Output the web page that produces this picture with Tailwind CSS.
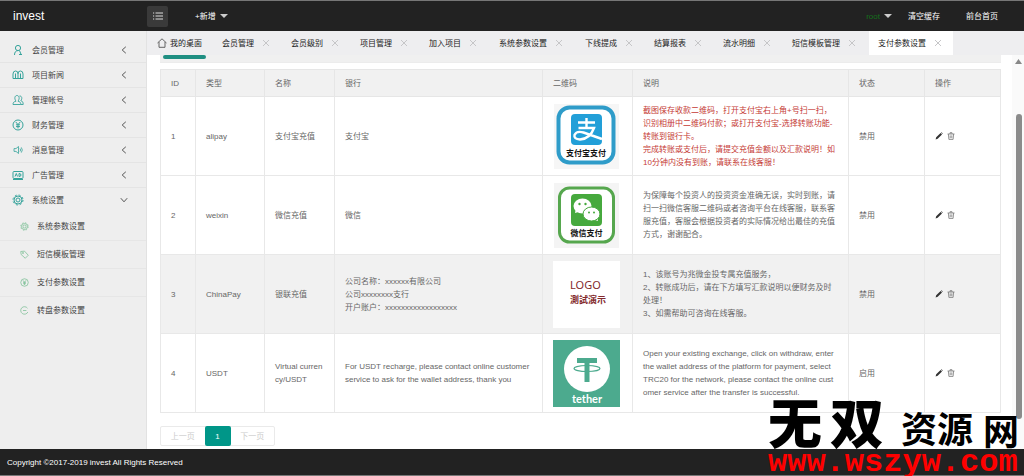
<!DOCTYPE html>
<html lang="zh-CN">
<head>
<meta charset="utf-8">
<title>invest</title>
<script src="https://cdn.jsdelivr.net/npm/@tailwindcss/browser@4"></script>
</head>
<body class="relative flex h-screen flex-col overflow-hidden bg-white font-['Liberation_Sans','Noto_Sans_CJK_SC',sans-serif] text-[8px] leading-[13px] text-[#666]">
<svg class="hidden" aria-hidden="true">
  <symbol id="left" viewBox="0 0 8 8"><path d="M5.800.8 2.200 4l3.600 3.200" fill="none" stroke="#555"/></symbol>
  <symbol id="x" viewBox="0 0 8 8"><path d="M1 1l6 6M7 1 1 7" fill="none" stroke="#c6c6c8"/></symbol>
  <symbol id="pen" viewBox="0 0 8 8"><path d="M.6 7.400 1.200 5.300 5.600 1 7 2.400 2.700 6.800zM6 .6l.6-.4 1.200 1.200-.4.6z" fill="#333"/></symbol>
  <symbol id="bin" viewBox="0 0 8 8"><path d="M.5 2h7M3 2V.7h2V2M1.400 2l.5 5.400h4.200L6.600 2M3.200 3.400v2.800M4.800 3.400v2.800" fill="none" stroke="#777" stroke-width=".8"/></symbol>
  <symbol id="yen" viewBox="0 0 12 12"><g fill="none" stroke="currentColor"><circle cx="6" cy="6" r="5"/><path d="M3.800 3 6 5.600 8.200 3M6 5.600v3.800M4 5.800h4M4 7.600h4"/></g></symbol>
  <symbol id="gear" viewBox="0 0 12 12"><g fill="none" stroke="currentColor"><circle cx="6" cy="6" r="4"/><circle cx="6" cy="6" r="2"/><circle cx="6" cy="6" r="5" stroke-dasharray="2 1.930"/></g></symbol>
</svg>

<header class="flex h-[31px] shrink-0 items-center border-t border-[#777] bg-[#222] text-white">
  <a href="#" class="w-[147px] pl-[13px] text-[12px]">invest</a>
  <button class="flex h-[21px] w-[21px] items-center justify-center rounded-xs bg-[#3a3a3a]" aria-label="菜单">
    <svg class="h-2 w-2.5" viewBox="0 0 10 8"><path d="M0 1h1.200M2.500 1H10M0 4h1.200M2.500 4H10M0 7h1.200M2.500 7H10" stroke="#ddd"/></svg>
  </button>
  <button class="ml-[27px] flex items-center gap-1">+新增<svg class="h-1 w-2" viewBox="0 0 8 4"><path d="M0 0h8L4 4z" fill="#ccc"/></svg></button>
  <nav class="ml-auto flex items-center pr-[26px]">
    <button class="mr-4 flex items-center gap-1 text-[#14701c]">root<svg class="h-1 w-2" viewBox="0 0 8 4"><path d="M0 0h8L4 4z" fill="#ccc"/></svg></button>
    <a href="#" class="mr-[26px]">清空缓存</a>
    <a href="#">前台首页</a>
  </nav>
</header>

<div class="flex min-h-0 flex-1">
  <aside class="w-[147px] shrink-0 border-r border-[#e2e2e2] bg-[#eee] pt-[7px] text-[#444]">
    <ul class="[&>li>a]:flex [&>li>a]:h-[25px] [&>li>a]:items-center [&>li>a]:border-b [&>li>a]:border-[#e4e4e4] [&>li>a]:pr-[18px] [&>li>a]:pl-3 [&>li>a>svg:first-child]:mr-2 [&>li>a>svg:first-child]:size-3 [&>li>a>svg:first-child]:text-[#35a39b] [&>li>a>svg:last-child]:ml-auto [&>li>a>svg:last-child]:size-2">
      <li><a href="#"><svg viewBox="0 0 12 12" fill="none" stroke="currentColor"><circle cx="6" cy="4" r="2.600"/><path d="M2.500 11c0-3 1.500-4.400 3.500-4.400M7.500 6.500 9.300 11M7 10.500h3"/></svg>会员管理<svg><use href="#left"/></svg></a></li>
      <li><a href="#"><svg viewBox="0 0 12 12" fill="none" stroke="currentColor"><path d="M1 9.500V5Q1 2 3.500 2T6 4.500Q6 2 8.500 2T11 5v4.500zM6 4v5M3.500 4.500v5M8.500 4.500v5"/></svg>项目新闻<svg><use href="#left"/></svg></a></li>
      <li><a href="#"><svg viewBox="0 0 12 12" fill="none" stroke="currentColor" stroke-width=".9"><path d="M1 10.500c0-2 .8-2.800 3-3.300C2 4.500 2.800 1.500 5 1.500S8 4.500 6 7.200c2 .5 2.800 1.300 2.800 3.300zM7.500 2c2.500-.3 3 2.800 1.300 4.700 1.700.4 2.400 1.500 2.400 3.800H9"/></svg>管理帐号<svg><use href="#left"/></svg></a></li>
      <li><a href="#"><svg><use href="#yen"/></svg>财务管理<svg><use href="#left"/></svg></a></li>
      <li><a href="#"><svg viewBox="0 0 12 12" fill="none" stroke="currentColor" stroke-width=".8"><path d="M2 4.600h2L6.500 2.500v7L4 7.400H2zM8 4.500q1.300 1.500 0 3M9.300 3.400q2 2.600 0 5.200"/></svg>消息管理<svg><use href="#left"/></svg></a></li>
      <li><a href="#"><svg viewBox="0 0 12 12" fill="none" stroke="currentColor"><rect x="1" y="2.500" width="10" height="7" rx="1"/><path d="M3 7.500 4.300 4.500l1.200 3M7 4.500v3q2 0 2-1.500T7 4.500M1 10.500h10"/></svg>广告管理<svg><use href="#left"/></svg></a></li>
      <li>
        <a href="#" class="!border-transparent"><svg><use href="#gear"/></svg>系统设置<svg class="-rotate-90"><use href="#left"/></svg></a>
        <ul class="[&_a]:flex [&_a]:h-7 [&_a]:items-center [&_a]:gap-2 [&_a]:border-b [&_a]:border-[#e6e6e6] [&_a]:pl-5 [&_svg]:size-[9px] [&_svg]:text-[#7cbf95]">
          <li><a href="#"><svg><use href="#gear"/></svg>系统参数设置</a></li>
          <li><a href="#"><svg viewBox="0 0 12 12" fill="none" stroke="currentColor"><path d="M1 2l5-.5L11 7l-4 4-5.500-5z"/><circle cx="4" cy="4" r=".8"/></svg>短信模板管理</a></li>
          <li><a href="#"><svg><use href="#yen"/></svg>支付参数设置</a></li>
          <li><a href="#" class="!border-transparent"><svg viewBox="0 0 12 12" fill="none" stroke="currentColor"><path d="M10 3a5 5 0 1 0 .5 5M4 6h4.500"/></svg>转盘参数设置</a></li>
        </ul>
      </li>
    </ul>
  </aside>

  <main class="relative flex min-w-0 flex-1 flex-col">
    <nav class="flex h-6 shrink-0 bg-[#eeeef0] pl-2.5 text-[#222] [&>a]:flex [&>a]:shrink-0 [&>a]:items-center [&>a]:gap-2 [&>a]:pl-[9px] [&>a>svg]:size-2">
      <a href="#" class="relative mr-[11px] !gap-[3px] !pl-0"><svg class="!size-[10px]" viewBox="0 0 10 10"><path d="M.5 5 5 .8 9.500 5M2 4v5.300h6V4" fill="none" stroke="#555" stroke-width=".9"/></svg>我的桌面<span class="absolute top-6 -right-1 z-10 h-1 w-[43px] rounded-xs bg-[#1f8f82]"></span></a>
      <a href="#" class="w-[69px]">会员管理<svg><use href="#x"/></svg></a>
      <a href="#" class="w-[69px]">会员级别<svg><use href="#x"/></svg></a>
      <a href="#" class="w-[69px]">项目管理<svg><use href="#x"/></svg></a>
      <a href="#" class="w-[70px]">加入项目<svg><use href="#x"/></svg></a>
      <a href="#" class="w-[86px]">系统参数设置<svg><use href="#x"/></svg></a>
      <a href="#" class="w-[69px]">下线提成<svg><use href="#x"/></svg></a>
      <a href="#" class="w-[69px]">结算报表<svg><use href="#x"/></svg></a>
      <a href="#" class="w-[69px]">流水明细<svg><use href="#x"/></svg></a>
      <a href="#" class="w-[86px]">短信模板管理<svg><use href="#x"/></svg></a>
      <a href="#" class="w-[84px] bg-white">支付参数设置<svg><use href="#x"/></svg></a>
    </nav>

    <div class="min-h-0 flex-1 overflow-hidden pr-[23px] pl-[13px]">
      <div class="mb-1.5 h-2 border-b border-[#ececec] bg-[#f0f0f0]"></div>
      <table class="w-full table-fixed border-collapse text-left [&_td]:border [&_td]:border-[#e8e8e8] [&_td]:px-2.5 [&_td]:py-0 [&_th]:border [&_th]:border-[#e6e6e6] [&_th]:px-2.5 [&_th]:font-normal [&_tbody_tr]:h-[79px]">
        <colgroup><col class="w-[35px]"><col class="w-[69px]"><col class="w-[70px]"><col class="w-[208px]"><col class="w-[90px]"><col><col class="w-[76px]"><col class="w-[76px]"></colgroup>
        <thead><tr class="h-[27px] bg-[#f1f1f1]"><th>ID</th><th>类型</th><th>名称</th><th>银行</th><th>二维码</th><th>说明</th><th>状态</th><th>操作</th></tr></thead>
        <tbody>
          <tr>
            <td>1</td><td>alipay</td><td>支付宝充值</td><td>支付宝</td>
            <td><svg class="size-[67px]" viewBox="0 0 67 67" role="img" aria-label="支付宝支付">
              <path d="M1 1h65v65H1z" fill="#f6f6f6"/><rect x="5.500" y="4.500" width="55" height="55" rx="11" fill="#fff" stroke="#2f9cc9" stroke-width="4"/>
              <rect x="18" y="11" width="31" height="31" rx="4" fill="#229fd8"/>
              <path d="M25 19.500h17M33.500 15v10M25.500 25H41Q37 36 27 36.500 20.500 36 21.500 32q2-4.500 9-2.500L49 36" fill="none" stroke="#fff" stroke-width="2.400"/>
              <text x="33" y="53" text-anchor="middle" font-size="8" font-weight="700" fill="#111">支付宝支付</text></svg></td>
            <td class="whitespace-nowrap text-[#c53a35]">截图保存收款二维码，打开支付宝右上角+号扫一扫，<br>识别相册中二维码付款；或打开支付宝-选择转账功能-<br>转账到银行卡。<br>完成转账或支付后，请提交充值金额以及汇款说明！如<br>10分钟内没有到账，请联系在线客服！</td>
            <td>禁用</td><td><div class="flex gap-1"><button aria-label="编辑"><svg class="size-2"><use href="#pen"/></svg></button><button aria-label="删除"><svg class="size-2"><use href="#bin"/></svg></button></div></td>
          </tr>
          <tr>
            <td>2</td><td>weixin</td><td>微信充值</td><td>微信</td>
            <td><svg class="size-[67px]" viewBox="0 0 67 67" role="img" aria-label="微信支付">
              <path d="M1 1h65v65H1z" fill="#f4f4f4"/><rect x="6.500" y="6" width="54" height="54" rx="10" fill="#fff" stroke="#56a74e" stroke-width="3"/>
              <rect x="18" y="12" width="31" height="32" rx="4" fill="#46a93d"/>
              <path d="M22 31l1-5h6v3zM45 39l-1-5h-5v3z" fill="#fff"/><ellipse cx="29.500" cy="24" rx="9" ry="7.500" fill="#fff"/><ellipse cx="38.500" cy="32" rx="8.500" ry="7" fill="#fff" stroke="#46a93d"/>
              <g fill="#46a93d"><circle cx="26.500" cy="22" r="1.200"/><circle cx="32.500" cy="22" r="1.200"/><circle cx="36" cy="30.500" r="1"/><circle cx="41" cy="30.500" r="1"/></g>
              <text x="33.500" y="54" text-anchor="middle" font-size="8" font-weight="700" fill="#111">微信支付</text></svg></td>
            <td class="whitespace-nowrap">为保障每个投资人的投资资金准确无误，实时到账，请<br>扫一扫微信客服二维码或者咨询平台在线客服，联系客<br>服充值，客服会根据投资者的实际情况给出最佳的充值<br>方式，谢谢配合。</td>
            <td>禁用</td><td><div class="flex gap-1"><button aria-label="编辑"><svg class="size-2"><use href="#pen"/></svg></button><button aria-label="删除"><svg class="size-2"><use href="#bin"/></svg></button></div></td>
          </tr>
          <tr class="bg-[#f1f1f1]">
            <td>3</td><td>ChinaPay</td><td>银联充值</td><td>公司名称：xxxxxx有限公司<br>公司xxxxxxxx支行<br>开户账户：xxxxxxxxxxxxxxxxxx</td>
            <td><svg class="size-[67px]" viewBox="0 0 67 67" role="img" aria-label="LOGO">
              <rect width="67" height="67" fill="#fff"/><text x="17" y="28" font-family="Noto Sans" font-size="11" fill="#832a2d">LOGO</text><text x="17" y="42" font-size="9" font-weight="700" fill="#832a2d" lang="zh-TW" font-family="Noto Sans CJK TC">測試演示</text></svg></td>
            <td class="whitespace-nowrap">1、该账号为兆微金投专属充值服务，<br>2、转账成功后，请在下方填写汇款说明以便财务及时<br>处理！<br>3、如需帮助可咨询在线客服。</td>
            <td>禁用</td><td><div class="flex gap-1"><button aria-label="编辑"><svg class="size-2"><use href="#pen"/></svg></button><button aria-label="删除"><svg class="size-2"><use href="#bin"/></svg></button></div></td>
          </tr>
          <tr>
            <td>4</td><td>USDT</td><td>Virtual curren<br>cy/USDT</td><td class="whitespace-nowrap">For USDT recharge, please contact online customer<br>service to ask for the wallet address, thank you</td>
            <td><svg class="size-[67px]" viewBox="0 0 67 67" role="img" aria-label="tether">
              <rect width="67" height="67" fill="#4caa8e"/><circle cx="34" cy="29" r="23" fill="#fff"/>
              <path d="M24 18h20v5h-7.500v19h-5V23H24z" fill="#4caa8e"/><ellipse cx="34" cy="28.500" rx="13" ry="3" fill="none" stroke="#4caa8e" stroke-width="1.200"/>
              <text x="34" y="63" text-anchor="middle" font-family="Lato" font-size="11" font-weight="700" fill="#fff">tether</text></svg></td>
            <td class="whitespace-nowrap">Open your existing exchange, click on withdraw, enter<br>the wallet address of the platform for payment, select<br>TRC20 for the network, please contact the online cust<br>omer service after the transfer is successful.</td>
            <td>启用</td><td><div class="flex gap-1"><button aria-label="编辑"><svg class="size-2"><use href="#pen"/></svg></button><button aria-label="删除"><svg class="size-2"><use href="#bin"/></svg></button></div></td>
          </tr>
        </tbody>
      </table>
      <div class="mt-[13px] flex h-5 w-[115px] rounded-xs border border-[#eaeaea] text-[#ccc]">
        <button class="flex-1" disabled>上一页</button>
        <button class="-my-px w-[26px] rounded-xs bg-[#009688] text-white">1</button>
        <button class="flex-1" disabled>下一页</button>
      </div>
    </div>

    <div class="absolute top-6 right-0 bottom-0 w-3 bg-[#fafafa]">
      <svg class="absolute top-1 left-[3px] h-[5px] w-[7px]" viewBox="0 0 7 5"><path d="M0 5h7L3.500 0z" fill="#888"/></svg>
      <div class="absolute top-[59px] right-0.5 h-[305px] w-1.5 rounded-full bg-[#8b8b8b]"></div>
    </div>
  </main>
</div>

<footer class="flex h-[27px] shrink-0 items-center border-b border-[#777] bg-[#222] pl-[7px] text-white">Copyright ©2017-2019 invest All Rights Reserved</footer>

<div class="absolute right-0 bottom-0 flex w-[256px] flex-col font-['Noto_Sans_CJK_SC',sans-serif] whitespace-nowrap text-black">
  <div class="flex h-[54px] items-end pb-1">
    <span class="w-[62px] text-[54px] leading-[50px] font-black">无</span>
    <span class="w-[71px] text-[54px] leading-[50px] font-black">双</span>
    <span class="w-[82px] text-[36px] leading-[38px] font-bold">资源</span>
    <span class="text-[36px] leading-[34px] font-bold">网</span>
  </div>
  <span class="font-['Liberation_Mono',monospace] text-[32px] leading-[26px] font-bold text-[#f00]">www.wszyw.com</span>
</div>
</body>
</html>
